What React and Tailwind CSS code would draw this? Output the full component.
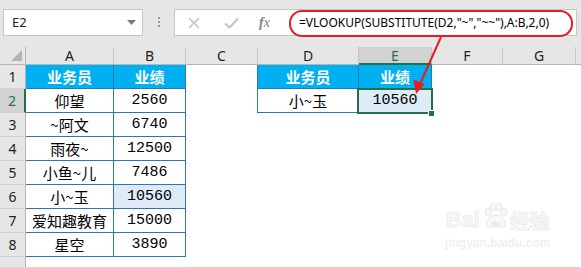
import React from "react";

const HDR = "bg-[#e6e6e6]";
const ui = { fontFamily: '"Noto Sans", "Liberation Sans", sans-serif' };
const cjk = { fontFamily: '"Noto Sans CJK SC", "Noto Sans", sans-serif' };
const num = { fontFamily: '"Liberation Mono", "DejaVu Sans Mono", monospace' };

const dataA = ["仰望", "~阿文", "雨夜~", "小鱼~儿", "小~玉", "爱知趣教育", "星空"];
const dataB = ["2560", "6740", "12500", "7486", "10560", "15000", "3890"];
const letters = ["A", "B", "C", "D", "E", "F", "G", ""];

function ColHeader({ l, i }) {
  if (l === "E") {
    return (
      <div className="bg-[#d2d2d2] border-r border-[#c6c6c6] border-b-2 border-b-[#217346] flex items-center justify-center text-[14px] text-[#217346]" style={ui}>
        {l}
      </div>
    );
  }
  return (
    <div className={`${HDR} ${i < 7 ? "border-r" : ""} border-[#c6c6c6] border-b border-b-[#b5b5b5] flex items-center justify-center text-[14px] text-[#222]`} style={ui}>
      {l}
    </div>
  );
}

function RowHeader({ n }) {
  const sel = n === 2;
  return (
    <div
      className={`${sel ? "bg-[#d2d2d2] border-r-2 border-r-[#217346] text-[#217346]" : `${HDR} border-r border-r-[#b5b5b5] text-[#222]`} border-b border-b-[#d0d0d0] flex items-center justify-center text-[14px]`}
      style={ui}
    >
      {n <= 8 ? n : ""}
    </div>
  );
}

function Cell({ children, kind = "plain", font, cls = "" }) {
  let c = "";
  if (kind === "head") c = "bg-[#00b0f0] text-white font-bold border-r border-b border-[#2e75b6]";
  else if (kind === "data") c = "bg-white text-black border-r border-b border-[#2e75b6]";
  else if (kind === "hl") c = "bg-[#ddebf7] text-black border-r border-b border-[#2e75b6]";
  else c = "bg-white";
  return (
    <div className={`${c} ${cls} flex items-center justify-center text-[15px] leading-none`} style={font}>
      {children}
    </div>
  );
}

export default function App() {
  const rows = [];
  for (let r = 1; r <= 9; r++) {
    const cells = [];
    cells.push(<RowHeader key="h" n={r} />);
    if (r === 1) cells.push(<Cell key="a" kind="head" font={cjk}>业务员</Cell>);
    else if (r <= 8) cells.push(<Cell key="a" kind="data" font={cjk}>{dataA[r - 2]}</Cell>);
    else cells.push(<Cell key="a" />);
    if (r === 1) cells.push(<Cell key="b" kind="head" font={cjk}>业绩</Cell>);
    else if (r <= 8) cells.push(<Cell key="b" kind={r === 6 ? "hl" : "data"} font={num} cls="text-[13px]">{dataB[r - 2]}</Cell>);
    else cells.push(<Cell key="b" />);
    cells.push(<Cell key="c" cls={r <= 2 ? "border-r border-[#2e75b6]" : ""} />);
    if (r === 1) cells.push(<Cell key="d" kind="head" font={cjk}>业务员</Cell>);
    else if (r === 2) cells.push(<Cell key="d" kind="data" font={cjk}>小~玉</Cell>);
    else cells.push(<Cell key="d" />);
    if (r === 1) cells.push(<Cell key="e" kind="head" font={cjk}>业绩</Cell>);
    else if (r === 2) cells.push(<Cell key="e" kind="hl" font={num} cls="text-[13px]">10560</Cell>);
    else cells.push(<Cell key="e" />);
    cells.push(<Cell key="f" />);
    cells.push(<Cell key="g" />);
    cells.push(<Cell key="z" />);
    rows.push(<React.Fragment key={r}>{cells}</React.Fragment>);
  }

  return (
    <div className="relative w-[581px] h-[267px] overflow-hidden bg-white">
      {/* formula bar */}
      <div className={`${HDR} h-[47px] flex items-start`}>
        <div className="ml-[3px] mt-[9px] w-[140px] h-[27px] bg-white border border-[#c6c6c6] flex items-center justify-between pl-[8px] pr-[6px]">
          <span className="text-[13px] text-[#222]" style={ui}>E2</span>
          <svg width="9" height="5" viewBox="0 0 9 5"><path d="M0 0h9L4.5 5z" fill="#7a7a7a" /></svg>
        </div>
        <div className="w-[31px] h-[47px] flex flex-col items-center justify-start pt-[17px] gap-[2px]">
          <div className="w-[2px] h-[2px] bg-[#9a9a9a]" />
          <div className="w-[2px] h-[2px] bg-[#9a9a9a]" />
          <div className="w-[2px] h-[2px] bg-[#9a9a9a]" />
        </div>
        <div className="mt-[9px] w-[403px] h-[27px] bg-white border border-[#c6c6c6] flex items-center">
          <div className="w-[112px] flex items-center">
            <svg className="ml-[13px]" width="12" height="12" viewBox="0 0 12 12">
              <path d="M1 1L11 11M11 1L1 11" stroke="#c4c4c4" strokeWidth="1.6" />
            </svg>
            <svg className="ml-[24px]" width="15" height="12" viewBox="0 0 15 12">
              <path d="M1 6.5L5.5 10.5L14 1.5" stroke="#c4c4c4" strokeWidth="2" fill="none" />
            </svg>
            <span className="ml-[20px] italic text-[14px] text-[#7f7f7f] leading-none" style={{ fontFamily: '"Liberation Serif", serif' }}>
              <span className="font-bold">f</span>x
            </span>
          </div>
          <span className="ml-[12px] text-[12px] text-black whitespace-nowrap" style={ui}>
            =VLOOKUP(SUBSTITUTE(D2,"~","~~"),A:B,2,0)
          </span>
        </div>
      </div>

      {/* sheet */}
      <div className="grid grid-cols-[26px_88px_72px_72px_101px_73px_71px_73px_1fr] grid-rows-[18px_repeat(9,24px)]">
        <div className={`${HDR} border-r border-b border-[#b5b5b5] relative`}>
          <svg className="absolute right-[3px] bottom-[3px]" width="11" height="11" viewBox="0 0 11 11">
            <path d="M11 0V11H0z" fill="#b4b4b4" />
          </svg>
        </div>
        {letters.map((l, i) => (
          <ColHeader key={i} l={l} i={i} />
        ))}
        {rows}
      </div>

      {/* selection E2 */}
      <div className="absolute left-[357px] top-[88px] w-[76px] h-[26px] border-2 border-[#217346] pointer-events-none" />
      <div className="absolute left-[428px] top-[110px] w-[7px] h-[7px] bg-[#217346] border border-white" />

      {/* red ellipse */}
      <div className="absolute left-[289px] top-[10px] w-[284px] h-[27px] rounded-[13px] border-2 border-[#e81b22]" />

      {/* arrow */}
      <svg className="absolute left-0 top-0" width="581" height="267" viewBox="0 0 581 267">
        <line x1="441" y1="37" x2="420" y2="84" stroke="#e81b22" strokeWidth="2" />
        <path d="M416 94 L413.5 79.5 L424.5 84.3 Z" fill="#e81b22" />
      </svg>

      {/* watermark */}
      <div className="absolute left-[445px] top-[203px] w-[105px] flex flex-col items-center pointer-events-none">
        <div className="flex items-end">
          <span className="text-[22px] font-bold leading-none text-[#f7f7f7]" style={{ fontFamily: '"Liberation Sans", sans-serif', WebkitTextStroke: "0.5px #e6e6e6" }}>Bai</span>
          <svg width="28" height="28" viewBox="0 0 28 28" className="mx-[1px]">
            <g fill="#f8f8f8" stroke="#e4e4e4" strokeWidth="0.8">
              <ellipse cx="7" cy="9" rx="3" ry="4" />
              <ellipse cx="12" cy="4" rx="3" ry="3.5" />
              <ellipse cx="18" cy="4" rx="3" ry="3.5" />
              <ellipse cx="23" cy="9" rx="3" ry="4" />
              <path d="M6 24 C4 16 10 12 15 12 C20 12 26 16 24 24 Z" />
            </g>
            <text x="15" y="23" textAnchor="middle" fontSize="8" fontWeight="bold" fill="#e4e4e4" fontFamily="Liberation Sans, sans-serif">du</text>
          </svg>
          <span className="text-[20px] font-bold leading-none text-[#f7f7f7]" style={{ fontFamily: '"Noto Sans CJK SC", sans-serif', WebkitTextStroke: "0.5px #e6e6e6" }}>经验</span>
        </div>
        <span className="mt-[6px] text-[12px] font-bold leading-none text-[#f0f0f0]" style={{ fontFamily: '"Liberation Sans", sans-serif' }}>jingyan.baidu.com</span>
      </div>
    </div>
  );
}
